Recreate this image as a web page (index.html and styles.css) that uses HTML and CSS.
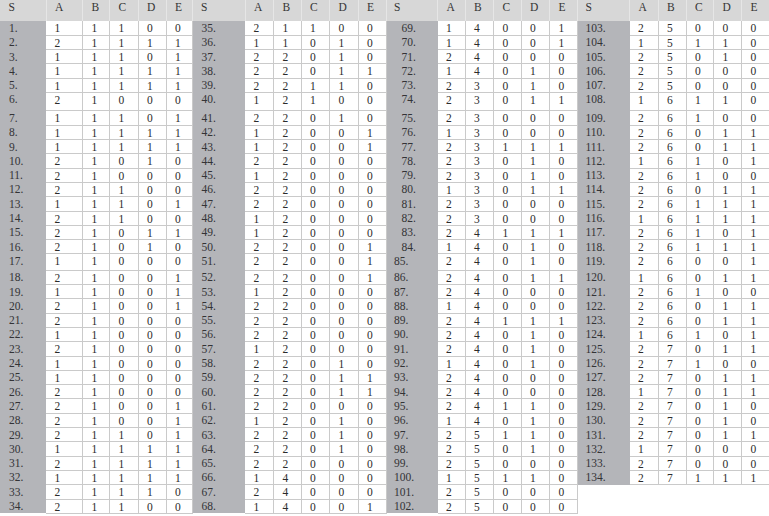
FILE: index.html
```html
<!DOCTYPE html>
<html>
<head>
<meta charset="utf-8">
<title>Table</title>
<link rel="stylesheet" href="styles.css">
</head>
<body>
<table class="sheet">
<colgroup>
<col class="w46"><col class="w365"><col class="w27"><col class="w285"><col class="w28"><col class="w26">
<col class="w53"><col class="w285"><col class="w275"><col class="w285"><col class="w285"><col class="w285">
<col class="w51"><col class="w275"><col class="w285"><col class="w275"><col class="w285"><col class="w275">
<col class="w525"><col class="w285"><col class="w28"><col class="w275"><col class="w28"><col class="w275">
</colgroup>
<thead>
<tr>
<th class="hs">S</th><th>A</th><th>B</th><th>C</th><th>D</th><th>E</th>
<th class="hs">S</th><th>A</th><th>B</th><th>C</th><th>D</th><th>E</th>
<th class="hs3">S</th><th>A</th><th>B</th><th>C</th><th>D</th><th>E</th>
<th class="hs4">S</th><th>A</th><th>B</th><th>C</th><th>D</th><th>E</th>
</tr>
</thead>
<tbody>
<tr><td class="s">1.</td><td>1</td><td>1</td><td>1</td><td>0</td><td>0</td><td class="s">35.</td><td>2</td><td>1</td><td>1</td><td>0</td><td>0</td><td class="s s3 in">69.</td><td>1</td><td>4</td><td>0</td><td>0</td><td>1</td><td class="s s4">103.</td><td>2</td><td>5</td><td>0</td><td>0</td><td>0</td></tr>
<tr><td class="s">2.</td><td>2</td><td>1</td><td>1</td><td>1</td><td>1</td><td class="s">36.</td><td>1</td><td>1</td><td>0</td><td>1</td><td>0</td><td class="s s3 in">70.</td><td>1</td><td>4</td><td>0</td><td>0</td><td>1</td><td class="s s4">104.</td><td>1</td><td>5</td><td>1</td><td>1</td><td>0</td></tr>
<tr><td class="s">3.</td><td>1</td><td>1</td><td>1</td><td>0</td><td>1</td><td class="s">37.</td><td>2</td><td>2</td><td>0</td><td>1</td><td>0</td><td class="s s3 in">71.</td><td>2</td><td>4</td><td>0</td><td>0</td><td>0</td><td class="s s4">105.</td><td>2</td><td>5</td><td>0</td><td>1</td><td>0</td></tr>
<tr><td class="s">4.</td><td>1</td><td>1</td><td>1</td><td>1</td><td>1</td><td class="s">38.</td><td>2</td><td>2</td><td>0</td><td>1</td><td>1</td><td class="s s3 in">72.</td><td>1</td><td>4</td><td>0</td><td>1</td><td>0</td><td class="s s4">106.</td><td>2</td><td>5</td><td>0</td><td>0</td><td>0</td></tr>
<tr><td class="s">5.</td><td>1</td><td>1</td><td>1</td><td>1</td><td>1</td><td class="s">39.</td><td>2</td><td>2</td><td>1</td><td>1</td><td>0</td><td class="s s3 in">73.</td><td>2</td><td>3</td><td>0</td><td>1</td><td>0</td><td class="s s4">107.</td><td>2</td><td>5</td><td>0</td><td>0</td><td>0</td></tr>
<tr class="tall"><td class="s">6.</td><td>2</td><td>1</td><td>0</td><td>0</td><td>0</td><td class="s">40.</td><td>1</td><td>2</td><td>1</td><td>0</td><td>0</td><td class="s s3 in">74.</td><td>2</td><td>3</td><td>0</td><td>1</td><td>1</td><td class="s s4">108.</td><td>1</td><td>6</td><td>1</td><td>1</td><td>0</td></tr>
<tr><td class="s">7.</td><td>1</td><td>1</td><td>1</td><td>0</td><td>1</td><td class="s">41.</td><td>2</td><td>2</td><td>0</td><td>1</td><td>0</td><td class="s s3 in">75.</td><td>2</td><td>3</td><td>0</td><td>0</td><td>0</td><td class="s s4">109.</td><td>2</td><td>6</td><td>1</td><td>0</td><td>0</td></tr>
<tr><td class="s">8.</td><td>1</td><td>1</td><td>1</td><td>1</td><td>1</td><td class="s">42.</td><td>1</td><td>2</td><td>0</td><td>0</td><td>1</td><td class="s s3 in">76.</td><td>1</td><td>3</td><td>0</td><td>0</td><td>0</td><td class="s s4">110.</td><td>2</td><td>6</td><td>0</td><td>1</td><td>1</td></tr>
<tr><td class="s">9.</td><td>1</td><td>1</td><td>1</td><td>1</td><td>1</td><td class="s">43.</td><td>1</td><td>2</td><td>0</td><td>0</td><td>1</td><td class="s s3 in">77.</td><td>2</td><td>3</td><td>1</td><td>1</td><td>1</td><td class="s s4">111.</td><td>2</td><td>6</td><td>0</td><td>1</td><td>1</td></tr>
<tr><td class="s">10.</td><td>2</td><td>1</td><td>0</td><td>1</td><td>0</td><td class="s">44.</td><td>2</td><td>2</td><td>0</td><td>0</td><td>0</td><td class="s s3 in">78.</td><td>2</td><td>3</td><td>0</td><td>1</td><td>0</td><td class="s s4">112.</td><td>1</td><td>6</td><td>1</td><td>0</td><td>1</td></tr>
<tr><td class="s">11.</td><td>2</td><td>1</td><td>0</td><td>0</td><td>0</td><td class="s">45.</td><td>1</td><td>2</td><td>0</td><td>0</td><td>0</td><td class="s s3 in">79.</td><td>2</td><td>3</td><td>0</td><td>1</td><td>0</td><td class="s s4">113.</td><td>2</td><td>6</td><td>1</td><td>0</td><td>0</td></tr>
<tr><td class="s">12.</td><td>2</td><td>1</td><td>1</td><td>0</td><td>0</td><td class="s">46.</td><td>2</td><td>2</td><td>0</td><td>0</td><td>0</td><td class="s s3 in">80.</td><td>1</td><td>3</td><td>0</td><td>1</td><td>1</td><td class="s s4">114.</td><td>2</td><td>6</td><td>0</td><td>1</td><td>1</td></tr>
<tr><td class="s">13.</td><td>1</td><td>1</td><td>1</td><td>0</td><td>1</td><td class="s">47.</td><td>2</td><td>2</td><td>0</td><td>0</td><td>0</td><td class="s s3 in">81.</td><td>2</td><td>3</td><td>0</td><td>0</td><td>0</td><td class="s s4">115.</td><td>2</td><td>6</td><td>1</td><td>1</td><td>1</td></tr>
<tr><td class="s">14.</td><td>2</td><td>1</td><td>1</td><td>0</td><td>0</td><td class="s">48.</td><td>1</td><td>2</td><td>0</td><td>0</td><td>0</td><td class="s s3 in">82.</td><td>2</td><td>3</td><td>0</td><td>0</td><td>0</td><td class="s s4">116.</td><td>1</td><td>6</td><td>1</td><td>1</td><td>1</td></tr>
<tr><td class="s">15.</td><td>2</td><td>1</td><td>0</td><td>1</td><td>1</td><td class="s">49.</td><td>1</td><td>2</td><td>0</td><td>0</td><td>0</td><td class="s s3 in">83.</td><td>2</td><td>4</td><td>1</td><td>1</td><td>1</td><td class="s s4">117.</td><td>2</td><td>6</td><td>1</td><td>0</td><td>1</td></tr>
<tr><td class="s">16.</td><td>2</td><td>1</td><td>0</td><td>1</td><td>0</td><td class="s">50.</td><td>2</td><td>2</td><td>0</td><td>0</td><td>1</td><td class="s s3 in">84.</td><td>1</td><td>4</td><td>0</td><td>1</td><td>0</td><td class="s s4">118.</td><td>2</td><td>6</td><td>1</td><td>1</td><td>1</td></tr>
<tr class="mid"><td class="s">17.</td><td>1</td><td>1</td><td>0</td><td>0</td><td>0</td><td class="s">51.</td><td>2</td><td>2</td><td>0</td><td>0</td><td>1</td><td class="s s3">85.</td><td>2</td><td>4</td><td>0</td><td>1</td><td>0</td><td class="s s4">119.</td><td>2</td><td>6</td><td>0</td><td>0</td><td>1</td></tr>
<tr><td class="s">18.</td><td>2</td><td>1</td><td>0</td><td>0</td><td>1</td><td class="s">52.</td><td>2</td><td>2</td><td>0</td><td>0</td><td>1</td><td class="s s3">86.</td><td>2</td><td>4</td><td>0</td><td>1</td><td>1</td><td class="s s4">120.</td><td>1</td><td>6</td><td>0</td><td>1</td><td>1</td></tr>
<tr><td class="s">19.</td><td>1</td><td>1</td><td>0</td><td>0</td><td>1</td><td class="s">53.</td><td>1</td><td>2</td><td>0</td><td>0</td><td>0</td><td class="s s3">87.</td><td>2</td><td>4</td><td>0</td><td>0</td><td>0</td><td class="s s4">121.</td><td>2</td><td>6</td><td>1</td><td>0</td><td>0</td></tr>
<tr><td class="s">20.</td><td>2</td><td>1</td><td>0</td><td>0</td><td>1</td><td class="s">54.</td><td>2</td><td>2</td><td>0</td><td>0</td><td>0</td><td class="s s3">88.</td><td>1</td><td>4</td><td>0</td><td>0</td><td>0</td><td class="s s4">122.</td><td>2</td><td>6</td><td>0</td><td>1</td><td>1</td></tr>
<tr><td class="s">21.</td><td>2</td><td>1</td><td>0</td><td>0</td><td>0</td><td class="s">55.</td><td>2</td><td>2</td><td>0</td><td>0</td><td>0</td><td class="s s3">89.</td><td>2</td><td>4</td><td>1</td><td>1</td><td>1</td><td class="s s4">123.</td><td>2</td><td>6</td><td>0</td><td>1</td><td>1</td></tr>
<tr><td class="s">22.</td><td>1</td><td>1</td><td>0</td><td>0</td><td>0</td><td class="s">56.</td><td>2</td><td>2</td><td>0</td><td>0</td><td>0</td><td class="s s3">90.</td><td>2</td><td>4</td><td>0</td><td>1</td><td>0</td><td class="s s4">124.</td><td>1</td><td>6</td><td>1</td><td>0</td><td>1</td></tr>
<tr><td class="s">23.</td><td>2</td><td>1</td><td>0</td><td>0</td><td>0</td><td class="s">57.</td><td>1</td><td>2</td><td>0</td><td>0</td><td>0</td><td class="s s3">91.</td><td>2</td><td>4</td><td>0</td><td>1</td><td>0</td><td class="s s4">125.</td><td>2</td><td>7</td><td>0</td><td>1</td><td>1</td></tr>
<tr><td class="s">24.</td><td>1</td><td>1</td><td>0</td><td>0</td><td>0</td><td class="s">58.</td><td>2</td><td>2</td><td>0</td><td>1</td><td>0</td><td class="s s3">92.</td><td>1</td><td>4</td><td>0</td><td>1</td><td>0</td><td class="s s4">126.</td><td>2</td><td>7</td><td>1</td><td>0</td><td>0</td></tr>
<tr><td class="s">25.</td><td>1</td><td>1</td><td>0</td><td>0</td><td>0</td><td class="s">59.</td><td>2</td><td>2</td><td>0</td><td>1</td><td>1</td><td class="s s3">93.</td><td>2</td><td>4</td><td>0</td><td>0</td><td>0</td><td class="s s4">127.</td><td>2</td><td>7</td><td>0</td><td>1</td><td>1</td></tr>
<tr><td class="s">26.</td><td>2</td><td>1</td><td>0</td><td>0</td><td>0</td><td class="s">60.</td><td>2</td><td>2</td><td>0</td><td>1</td><td>1</td><td class="s s3">94.</td><td>2</td><td>4</td><td>0</td><td>0</td><td>0</td><td class="s s4">128.</td><td>1</td><td>7</td><td>0</td><td>1</td><td>1</td></tr>
<tr><td class="s">27.</td><td>2</td><td>1</td><td>0</td><td>0</td><td>1</td><td class="s">61.</td><td>2</td><td>2</td><td>0</td><td>0</td><td>0</td><td class="s s3">95.</td><td>2</td><td>4</td><td>1</td><td>1</td><td>0</td><td class="s s4">129.</td><td>2</td><td>7</td><td>0</td><td>1</td><td>0</td></tr>
<tr><td class="s">28.</td><td>2</td><td>1</td><td>0</td><td>0</td><td>1</td><td class="s">62.</td><td>1</td><td>2</td><td>0</td><td>1</td><td>0</td><td class="s s3">96.</td><td>1</td><td>4</td><td>0</td><td>1</td><td>0</td><td class="s s4">130.</td><td>2</td><td>7</td><td>0</td><td>1</td><td>0</td></tr>
<tr><td class="s">29.</td><td>2</td><td>1</td><td>1</td><td>0</td><td>1</td><td class="s">63.</td><td>2</td><td>2</td><td>0</td><td>1</td><td>0</td><td class="s s3">97.</td><td>2</td><td>5</td><td>1</td><td>1</td><td>0</td><td class="s s4">131.</td><td>2</td><td>7</td><td>0</td><td>1</td><td>1</td></tr>
<tr><td class="s">30.</td><td>1</td><td>1</td><td>1</td><td>1</td><td>1</td><td class="s">64.</td><td>2</td><td>2</td><td>0</td><td>1</td><td>0</td><td class="s s3">98.</td><td>2</td><td>5</td><td>0</td><td>1</td><td>0</td><td class="s s4">132.</td><td>1</td><td>7</td><td>0</td><td>0</td><td>0</td></tr>
<tr><td class="s">31.</td><td>2</td><td>1</td><td>1</td><td>1</td><td>1</td><td class="s">65.</td><td>2</td><td>2</td><td>0</td><td>0</td><td>0</td><td class="s s3">99.</td><td>2</td><td>5</td><td>0</td><td>0</td><td>0</td><td class="s s4">133.</td><td>2</td><td>7</td><td>0</td><td>0</td><td>0</td></tr>
<tr><td class="s">32.</td><td>1</td><td>1</td><td>1</td><td>1</td><td>1</td><td class="s">66.</td><td>1</td><td>4</td><td>0</td><td>0</td><td>0</td><td class="s s3">100.</td><td>1</td><td>5</td><td>1</td><td>1</td><td>0</td><td class="s s4">134.</td><td>2</td><td>7</td><td>1</td><td>1</td><td>1</td></tr>
<tr><td class="s">33.</td><td>2</td><td>1</td><td>1</td><td>1</td><td>0</td><td class="s">67.</td><td>2</td><td>4</td><td>0</td><td>0</td><td>0</td><td class="s s3">101.</td><td>2</td><td>5</td><td>0</td><td>0</td><td>0</td><td class="x"></td><td class="x"></td><td class="x"></td><td class="x"></td><td class="x"></td><td class="x"></td></tr>
<tr><td class="s">34.</td><td>2</td><td>1</td><td>1</td><td>0</td><td>0</td><td class="s">68.</td><td>1</td><td>4</td><td>0</td><td>0</td><td>1</td><td class="s s3">102.</td><td>2</td><td>5</td><td>0</td><td>0</td><td>0</td><td class="x"></td><td class="x"></td><td class="x"></td><td class="x"></td><td class="x"></td><td class="x"></td></tr>
</tbody>
</table>
</body>
</html>
```
FILE: styles.css
```css
html, body {
  margin: 0;
  padding: 0;
  background: #ffffff;
}

body {
  font-family: "Liberation Serif", "Times New Roman", serif;
  font-size: 11.5px;
  color: #2b2b2b;
}

.sheet {
  width: 769px;
  border-collapse: collapse;
  table-layout: fixed;
  font-family: "Liberation Serif", "Times New Roman", serif;
  font-size: 11.5px;
}

.w46 { width: 46px; }
.w365 { width: 36.5px; }
.w27 { width: 27px; }
.w285 { width: 28.5px; }
.w28 { width: 28px; }
.w26 { width: 26px; }
.w53 { width: 53px; }
.w275 { width: 27.5px; }
.w51 { width: 51px; }
.w525 { width: 52.5px; }

.sheet th,
.sheet td {
  padding: 0 0 0 8.5px;
  text-align: left;
  font-weight: normal;
  line-height: 11px;
  vertical-align: top;
  white-space: nowrap;
  overflow: hidden;
}

.sheet thead tr {
  height: 21px;
}

.sheet thead th {
  padding-top: 1.5px;
  background: #d7d7d7;
  color: #353535;
  border-right: 1px solid #e6e6e6;
  border-bottom: none;
}

.sheet thead th.hs { padding-left: 8.5px; }
.sheet thead th.hs3 { padding-left: 7px; }
.sheet thead th.hs4 { padding-left: 8px; }

.sheet tbody tr {
  height: 14.3px;
}

.sheet tbody tr.tall {
  height: 18.5px;
}

.sheet tbody tr.mid {
  height: 16.3px;
}

.sheet tbody td {
  padding-top: 2px;
  border-right: 1px solid #cacaca;
  border-bottom: 1px solid #cacaca;
  background: #ffffff;
}

.sheet tbody td.s {
  background: #b4b5b9;
  color: #333336;
  border-right: none;
  border-bottom: none;
  padding-left: 9px;
}

.sheet tbody td.s3 { padding-left: 7px; }
.sheet tbody td.s3.in { padding-left: 14.5px; }
.sheet tbody td.s4 { padding-left: 8px; }

.sheet tbody td.x {
  background: #ffffff;
  border: none;
}
```
